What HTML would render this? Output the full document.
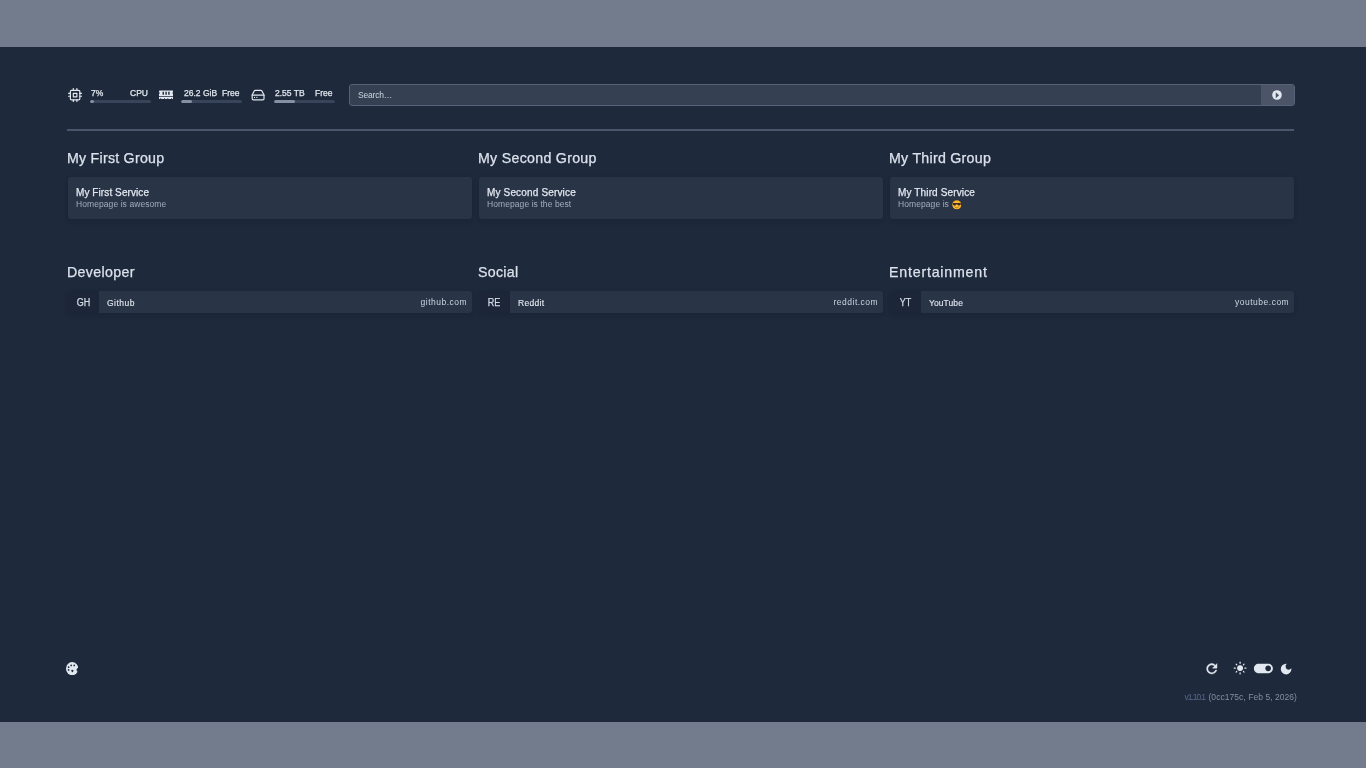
<!DOCTYPE html>
<html lang="en">
<head>
<meta charset="utf-8">
<title>Homepage</title>
<style>
*{box-sizing:border-box;margin:0;padding:0}
html,body{width:1366px;height:768px;overflow:hidden}
body{background:#737c8c;font-family:"Liberation Sans",sans-serif;color:#e2e8f0;position:relative}
#app{position:absolute;left:0;top:47px;width:1366px;height:675px;background:#1e293b}
.abs{position:absolute}
#fx{position:absolute;left:0;top:0;width:1366px;height:675px;filter:blur(.6px)}
.t,h2,.card b,.bm .ab{-webkit-text-stroke:.25px currentColor}
.bm .nm{-webkit-text-stroke:.12px currentColor}
.bar{position:absolute;height:3px;border-radius:2px;background:#38445a;overflow:hidden}
.bar i{display:block;height:3px;border-radius:2px;background:#8491a5}
.t{position:absolute;white-space:nowrap;line-height:1}
.search{position:absolute;left:349px;top:37px;width:946px;height:22px;border-radius:3px;background:#354052;border:1px solid #56617a;overflow:hidden}
.search span{position:absolute;left:8px;top:6px;font-size:8.5px;line-height:9px;letter-spacing:-.2px;color:#cbd5e1}
.search .btn{position:absolute;right:0;top:0;width:33px;height:20px;background:#4b5567}
hr.sep{position:absolute;left:67px;top:82px;width:1227px;height:2px;border:0;background:#4a566b}
h2{position:absolute;font-weight:400;font-size:14.2px;line-height:18px;color:#dbe2ec;white-space:nowrap}
.card{position:absolute;height:42px;width:404.5px;margin-left:.7px;top:130px;border-radius:3px;background:#293446;box-shadow:0 2px 4px rgba(15,23,42,.25)}
.card b{position:absolute;left:8.3px;top:10px;font-weight:400;font-size:10px;line-height:11px;color:#e2e8f0;white-space:nowrap}
.card span{position:absolute;left:8.3px;top:23.2px;font-size:8.5px;line-height:9px;letter-spacing:.08px;color:#a3aebf;white-space:nowrap}
.bm{position:absolute;height:22px;width:404.5px;margin-left:.7px;top:244px;border-radius:3px;background:#293446;box-shadow:0 2px 4px rgba(15,23,42,.25);overflow:hidden}
.bm .ab{position:absolute;left:0;top:0;width:31px;height:22px;background:#1c2638;font-size:10px;line-height:22px;padding-top:1px;text-align:center;color:#d5dce6}
.bm .ab span{display:inline-block;transform:scaleX(.9)}
.bm .nm{position:absolute;left:39.3px;top:.5px;font-size:8.5px;line-height:22px;color:#e2e8f0}
.bm .ur{position:absolute;right:5px;top:-.2px;font-size:8.5px;line-height:22px;letter-spacing:.5px;color:#cbd5e1}
.ver{position:absolute;right:69px;top:645.6px;font-size:8.5px;line-height:9px;letter-spacing:.05px;color:#8290a4;white-space:nowrap}
.ver span{color:#56678a;letter-spacing:-1.05px;margin-right:1px}
</style>
</head>
<body>
<div id="app">
<div id="fx">
  <!-- resources -->
  <div class="t" style="left:91px;top:41.5px;font-size:8.5px">7%</div>
  <div class="t" style="left:130px;top:41.5px;font-size:8.5px">CPU</div>
  <div class="bar" style="left:90px;top:53px;width:61px"><i style="width:7%"></i></div>
  <div class="t" style="left:184px;top:41.5px;font-size:8.5px">26.2 GiB</div>
  <div class="t" style="left:222px;top:41.5px;font-size:8.5px">Free</div>
  <div class="bar" style="left:181px;top:53px;width:61px"><i style="width:18%"></i></div>
  <div class="t" style="left:275px;top:41.5px;font-size:8.5px">2.55 TB</div>
  <div class="t" style="left:315px;top:41.5px;font-size:8.5px">Free</div>
  <div class="bar" style="left:274px;top:53px;width:61px"><i style="width:35%"></i></div>


  <!-- resource icons -->
  <svg class="abs" style="left:67.6px;top:40.6px" width="14.2" height="14.2" viewBox="0 0 24 24" fill="none" stroke="#e2e8f0" stroke-width="2" stroke-linecap="round" stroke-linejoin="round"><rect x="4" y="4" width="16" height="16" rx="2" ry="2"/><rect x="9" y="9" width="6" height="6"/><line x1="9" y1="1" x2="9" y2="4"/><line x1="15" y1="1" x2="15" y2="4"/><line x1="9" y1="20" x2="9" y2="23"/><line x1="15" y1="20" x2="15" y2="23"/><line x1="20" y1="9" x2="23" y2="9"/><line x1="20" y1="14" x2="23" y2="14"/><line x1="1" y1="9" x2="4" y2="9"/><line x1="1" y1="14" x2="4" y2="14"/></svg>
  <svg class="abs" style="left:158.9px;top:42.1px" width="14.2" height="11.4" viewBox="0 0 640 512" fill="#e2e8f0"><path d="M640 130.94V96c0-17.67-14.33-32-32-32H32C14.33 64 0 78.33 0 96v34.94c18.6 6.61 32 24.19 32 45.06s-13.4 38.450-32 45.060V320h640v-98.940c-18.600-6.610-32-24.190-32-45.060s13.400-38.450 32-45.060zM224 256h-64V128h64v128zm128 0h-64V128h64v128zm128 0h-64V128h64v128zM0 448h64v-26.670c0-8.840 7.160-16 16-16s16 7.160 16 16V448h128v-26.670c0-8.840 7.160-16 16-16s16 7.160 16 16V448h128v-26.670c0-8.840 7.160-16 16-16s16 7.160 16 16V448h128v-26.670c0-8.840 7.160-16 16-16s16 7.160 16 16V448h64v-96H0v96z"/></svg>
  <svg class="abs" style="left:251.2px;top:40.6px" width="14.2" height="14.2" viewBox="0 0 24 24" fill="none" stroke="#e2e8f0" stroke-width="2" stroke-linecap="round" stroke-linejoin="round"><line x1="22" y1="12" x2="2" y2="12"/><path d="M5.45 5.11L2 12v6a2 2 0 0 0 2 2h16a2 2 0 0 0 2-2v-6l-3.450-6.890A2 2 0 0 0 16.760 4H7.240a2 2 0 0 0-1.790 1.110z"/><line x1="6" y1="16" x2="6.010" y2="16"/><line x1="10" y1="16" x2="10.010" y2="16"/></svg>
  <div class="search"><span>Search…</span><div class="btn"><svg class="abs" style="left:10.7px;top:5px" width="10" height="10" viewBox="0 0 24 24"><circle cx="12" cy="12" r="11.500" fill="#e2e8f0"/><path d="M9 5.500 L17 12.500 L9 19.500 Z" fill="#4b5567"/></svg></div></div>
  <hr class="sep">

  <h2 style="left:67px;top:102px;letter-spacing:0.25px">My First Group</h2>
  <h2 style="left:478px;top:102px;letter-spacing:0.29px">My Second Group</h2>
  <h2 style="left:889px;top:102px;letter-spacing:0.27px">My Third Group</h2>
  <div class="card" style="left:67px"><b style="letter-spacing:0.09px">My First Service</b><span>Homepage is awesome</span></div>
  <div class="card" style="left:478px"><b style="letter-spacing:0.16px">My Second Service</b><span>Homepage is the best</span></div>
  <div class="card" style="left:889px"><b style="letter-spacing:0.14px">My Third Service</b><span>Homepage is <svg role="img" aria-label="smiling face with sunglasses" style="position:absolute;left:53.6px;top:.3px" width="9.6" height="9.6" viewBox="0 0 36 36"><circle cx="18" cy="18" r="17" fill="#f9a825"/><circle cx="18" cy="19.500" r="14" fill="#fdc02f"/><path d="M3 11h30v3.500c0 4-2.600 6.500-6.500 6.500s-6-2.500-6.700-5.500h-3.600c-.7 3-2.800 5.500-6.700 5.500S3 18.500 3 14.500z" fill="#3b2a2a"/><path d="M10.500 25.500c2 2.600 4.700 3.800 7.500 3.800s5.500-1.200 7.500-3.800" fill="none" stroke="#7a3b12" stroke-width="2.200" stroke-linecap="round"/></svg></span></div>

  <h2 style="left:67px;top:216px;letter-spacing:0.36px">Developer</h2>
  <h2 style="left:478px;top:216px;letter-spacing:0.3px">Social</h2>
  <h2 style="left:889px;top:216px;letter-spacing:.8px">Entertainment</h2>
  <div class="bm" style="left:67px"><div class="ab"><span>GH</span></div><div class="nm" style="letter-spacing:.5px">Github</div><div class="ur">github.com</div></div>
  <div class="bm" style="left:478px"><div class="ab"><span>RE</span></div><div class="nm" style="letter-spacing:.3px">Reddit</div><div class="ur">reddit.com</div></div>
  <div class="bm" style="left:889px"><div class="ab"><span>YT</span></div><div class="nm" style="letter-spacing:.08px">YouTube</div><div class="ur">youtube.com</div></div>


  <!-- footer icons -->
  <svg class="abs" style="left:65.6px;top:614.9px" width="12.3" height="13.3" viewBox="0 0 100 108" fill="#e2e8f0"><ellipse cx="50" cy="54" rx="50" ry="54"/><g fill="#1e293b"><circle cx="21" cy="42" r="7"/><circle cx="21" cy="64" r="7"/><circle cx="42" cy="28" r="7"/><circle cx="67" cy="28" r="7"/><path d="M46 68l12 0-6 14z" stroke="#1e293b" stroke-width="8" stroke-linejoin="round"/><circle cx="101" cy="64" r="15"/></g></svg>
  <svg class="abs" style="left:1204.2px;top:614.2px" width="15.6" height="15.6" viewBox="0 0 24 24" fill="#e2e8f0" stroke="#e2e8f0" stroke-width=".6"><path d="M17.650 6.350C16.200 4.900 14.210 4 12 4c-4.420 0-7.990 3.580-7.990 8s3.570 8 7.990 8c3.730 0 6.840-2.550 7.730-6h-2.080c-.82 2.330-3.040 4-5.650 4-3.310 0-6-2.690-6-6s2.690-6 6-6c1.660 0 3.140.69 4.220 1.780L13 11h7V4l-2.350 2.350z"/></svg>
  <svg class="abs" style="left:1232.9px;top:614.4px" width="14.2" height="14.2" viewBox="0 0 24 24" fill="#e2e8f0" stroke="#e2e8f0" stroke-width="2" stroke-linecap="round"><circle cx="12" cy="12" r="4" stroke="none" r="5"/><circle cx="12" cy="12" r="4"/><line x1="12" y1="2" x2="12" y2="4"/><line x1="12" y1="20" x2="12" y2="22"/><line x1="2" y1="12" x2="4" y2="12"/><line x1="20" y1="12" x2="22" y2="12"/><line x1="5.300" y1="5.300" x2="6.350" y2="6.350"/><line x1="17.650" y1="17.650" x2="18.700" y2="18.700"/><line x1="18.700" y1="5.300" x2="17.650" y2="6.350"/><line x1="5.300" y1="18.700" x2="6.350" y2="17.650"/></svg>
  <svg class="abs" style="left:1251.8px;top:610.2px" width="22.8" height="22.8" viewBox="0 0 24 24" fill="#e2e8f0" fill-rule="evenodd"><path d="M17 7H7c-2.760 0-5 2.240-5 5s2.240 5 5 5h10c2.760 0 5-2.240 5-5s-2.240-5-5-5zm0 8c-1.660 0-3-1.340-3-3s1.340-3 3-3 3 1.340 3 3-1.340 3-3 3z"/></svg>
  <svg class="abs" style="left:1279.1px;top:614.5px" width="14.2" height="14.2" viewBox="0 0 24 24" fill="#e2e8f0"><path d="M12 3a9 9 0 1 0 9 9c0-.46-.04-.92-.1-1.360a5.389 5.389 0 0 1-4.400 2.260 5.403 5.403 0 0 1-3.140-9.800c-.44-.06-.9-.1-1.360-.1z"/></svg>
  <div class="ver"><span>v1.10.1</span> (0cc175c, Feb 5, 2026)</div>
</div>
</div>
</body>
</html>
